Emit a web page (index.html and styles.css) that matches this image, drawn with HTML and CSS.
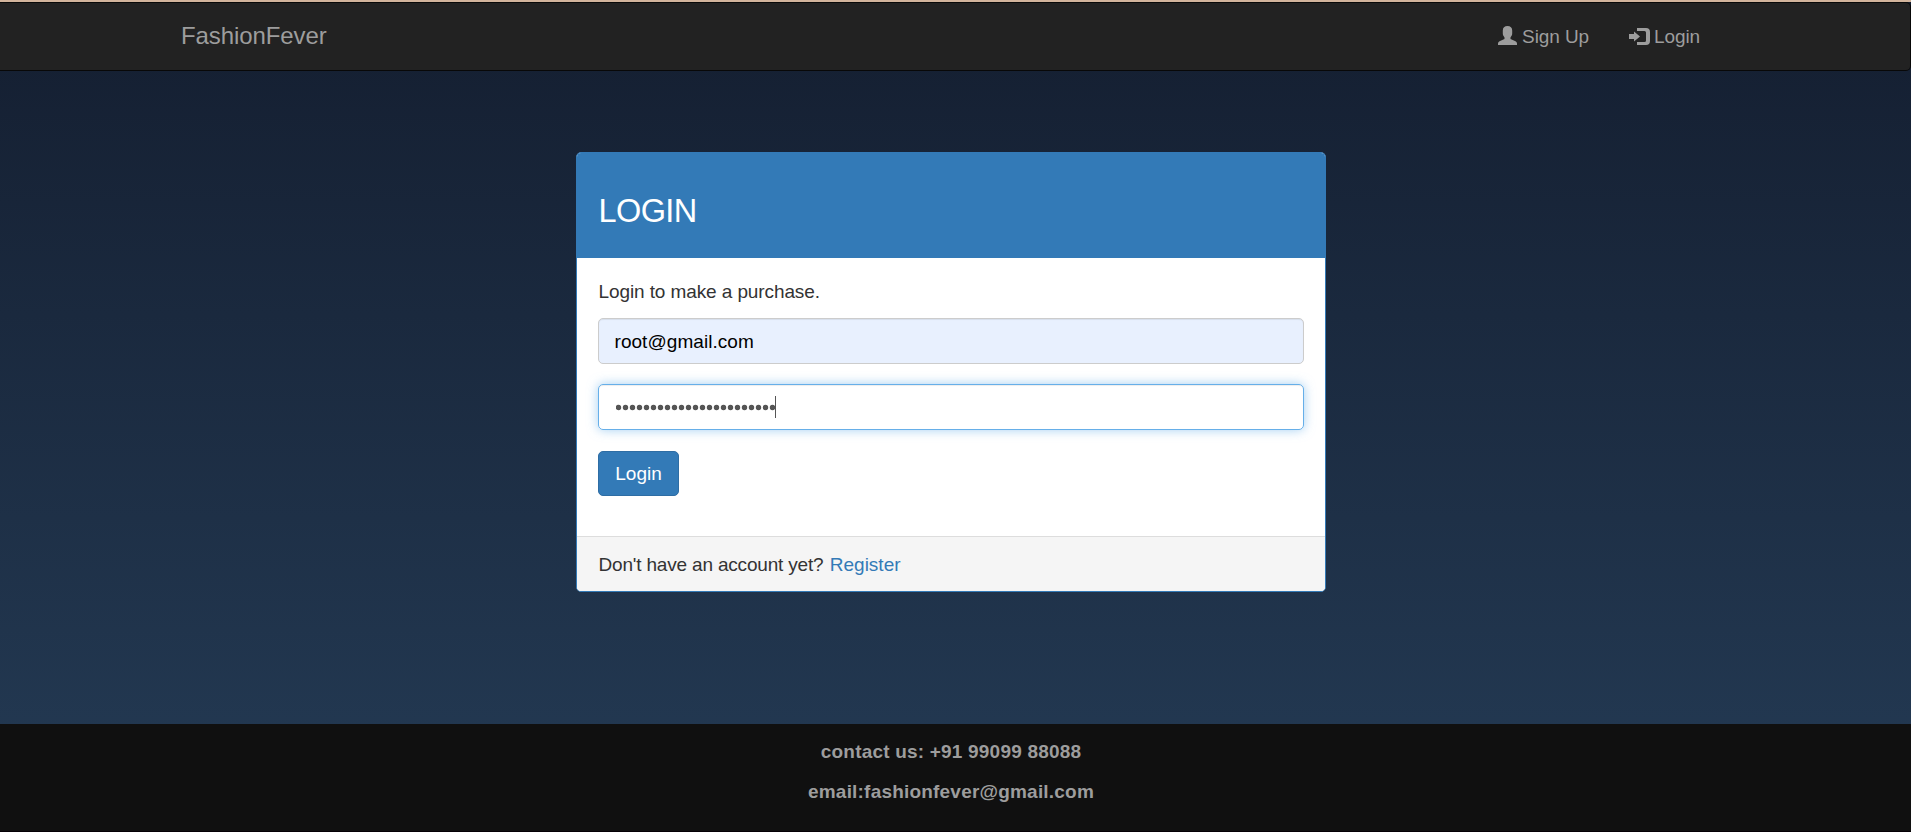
FILE: index.html
```html
<!DOCTYPE html>
<html lang="en">
<head>
<meta charset="utf-8">
<title>FashionFever</title>
<link rel="stylesheet" href="styles.css">
</head>
<body>
<nav class="navbar">
  <a class="brand"><span>FashionFever</span></a>
  <div class="nav-links">
    <a class="nav-link"><svg class="icon" width="19" height="19" viewBox="0 0 19 19"><path d="M9.500 0C12.500 0 14.200 1.700 14.200 4.500V7.500C14.200 9.300 13.200 10.300 12.500 11.500V13L17.500 15.200Q19 16 19 17.500V19H0V17.500Q0 16 1.500 15.200L6.500 13V11.500C5.800 10.300 4.800 9.300 4.800 7.500V4.500C4.800 1.700 6.500 0 9.500 0Z"/></svg><span class="nav-text">Sign Up</span></a>
    <a class="nav-link nav-link-login"><svg class="icon icon-login" width="21" height="17" viewBox="0 0 21 17"><path d="M0 6H5V3.500L11 8.500L5 13.500V11H0Z"/><path d="M8 0H17Q21 0 21 4V13Q21 17 17 17H8V14H15.500Q17 14 17 12.500V4.500Q17 3 15.500 3H8Z"/></svg><span class="nav-text">Login</span></a>
  </div>
</nav>
<main class="content">
  <section class="panel">
    <header class="panel-heading"><h1><span>LOGIN</span></h1></header>
    <form class="panel-body">
      <p class="lead"><span>Login to make a purchase.</span></p>
      <div class="field field-filled"><span>root@gmail.com</span></div>
      <div class="field field-focus">
        <svg class="mask" width="160" height="22" viewBox="0 0 160 22"><path class="dots" d="M2.500 11.500H157"/><path class="caret" d="M159.500 0V22"/></svg>
      </div>
      <button type="button" class="btn"><span>Login</span></button>
    </form>
    <footer class="panel-footer"><span class="question">Don't have an account yet?</span> <a class="register">Register</a></footer>
  </section>
</main>
<footer class="site-footer">
  <p><span>contact us: +91 99099 88088</span></p>
  <p><span>email:fashionfever@gmail.com</span></p>
</footer>
</body>
</html>
```
FILE: styles.css
```css
* { box-sizing: border-box; }
body {
  margin: 0;
  height: 832px;
  display: flex;
  flex-direction: column;
  overflow: hidden;
  border-top: 2px solid #d2b49c;
  background: linear-gradient(#141e30, #243b55) 0 0 / 100% 832px;
  font: 19px/27px "Liberation Sans", Arial, sans-serif;
  color: #333;
}
p, h1 { margin: 0; }
.navbar {
  flex: none;
  height: 69px;
  display: flex;
  align-items: center;
  justify-content: space-between;
  padding: 0 210px 2px 181px;
  background: #222;
  border: 1px solid #080808;
  border-left: 0;
  border-radius: 0 5px 5px 0;
  color: #9d9d9d;
}
.brand { font-size: 24px; letter-spacing: -.1px; }
.nav-links { display: flex; gap: 40px; }
.nav-link { display: flex; align-items: center; gap: 5px; }
.nav-link-login { gap: 4px; }
.nav-text { margin-top: 1px; letter-spacing: -.1px; }
.icon { fill: currentColor; margin-top: -1px; }
.icon-login { margin-top: 1px; }
.content {
  flex: 1;
  display: flex;
  justify-content: center;
  align-items: flex-start;
  padding: 81px 10px 0 0;
}
.panel {
  width: 750px;
  height: 440px;
  display: flex;
  flex-direction: column;
  border: 1px solid #337ab7;
  border-radius: 5px;
  background: #fff;
  overflow: hidden;
}
.panel-heading {
  height: 105px;
  padding: 39px 22px 0;
  background: #337ab7;
  color: #fff;
}
h1 { font-size: 32.5px; font-weight: 400; line-height: 38px; letter-spacing: -.6px; }
.panel-body {
  flex: 1;
  padding: 20px 21px 0;
}
.lead { height: 40px; padding-left: 1px; letter-spacing: -.1px; }
.field {
  height: 46px;
  display: flex;
  align-items: center;
  padding: 0 16px;
  border: 1px solid #ccc;
  border-radius: 5px;
  margin-bottom: 20px;
  box-shadow: inset 0 1px 1px rgba(0, 0, 0, .075);
}
.field-filled { background: #e8f0fe; color: #000; letter-spacing: .05px; }
.field-focus {
  border-color: #66afe9;
  box-shadow: inset 0 1px 1px rgba(0, 0, 0, .075), 0 0 11px rgba(102, 175, 233, .6);
}
.mask { margin-left: 1px; fill: none; }
.dots { stroke: #555; stroke-width: 5.400; stroke-linecap: round; stroke-dasharray: 0 7; }
.caret { stroke: #555; stroke-width: 1; }
.btn {
  display: block;
  width: 81px;
  height: 45px;
  margin-top: 21px;
  padding: 0 0 0 1px;
  border: 1px solid #2e6da4;
  border-radius: 5px;
  background: #337ab7;
  color: #fff;
  font: inherit;
}
.panel-footer {
  height: 55px;
  padding: 14px 22px 0;
  border-top: 1px solid #ddd;
  background: #f5f5f5;
}
.question { letter-spacing: -.18px; }
.register { color: #337ab7; margin-left: 1px; }
.site-footer {
  flex: none;
  height: 108px;
  display: flex;
  flex-direction: column;
  align-items: center;
  gap: 13px;
  padding: 14px 9px 0 0;
  border-bottom: 1px solid #050005;
  background: #101010;
  color: #9d9d9d;
  font-weight: 700;
  letter-spacing: .2px;
}
```
